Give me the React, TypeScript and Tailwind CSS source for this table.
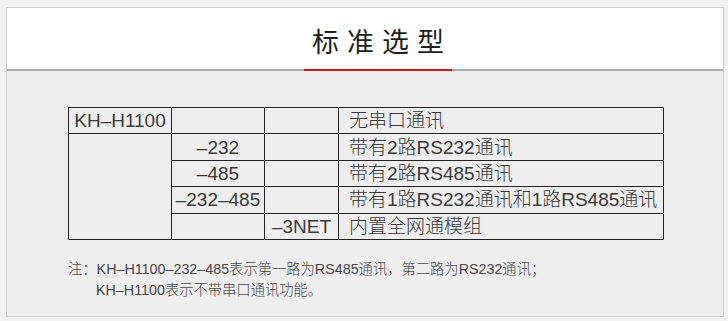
export default function App() {
  const rows = [
    { a: 'KH–H1100', b: '', c: '', d: '无串口通讯' },
    { a: null, b: '–232', c: '', d: '带有2路RS232通讯' },
    { a: null, b: '–485', c: '', d: '带有2路RS485通讯' },
    { a: null, b: '–232–485', c: '', d: '带有1路RS232通讯和1路RS485通讯' },
    { a: null, b: '', c: '–3NET', d: '内置全网通模组' },
  ];

  return (
    <div
      className="w-full h-[321px] bg-[#f1f1f1] pt-[7px] pl-[6px]"
      style={{ fontFamily: '"Liberation Sans", "Noto Sans CJK SC", sans-serif' }}
    >
      <div className="w-[718px] h-[310px] border border-[#cdcdcd] bg-[#eeeeee]">
        {/* header */}
        <div className="bg-white h-[61px] flex items-end pl-[297px]">
          <div className="w-[148px] text-center text-[27px] leading-[27px] tracking-[8px] pl-[8px] text-[#1e1e1e] pb-[12px]">
            标准选型
          </div>
        </div>
        <div className="h-[2px] bg-[#ababab] flex">
          <div className="w-[297px]" />
          <div className="w-[148px] bg-[#c81a1a]" />
        </div>

        {/* table */}
        <div className="pt-[36px] pl-[61px]">
          <table className="border-collapse text-[19px] text-[#3a3a3a] font-light leading-none">
            <tbody>
              {rows.map((r, i) => (
                <tr key={i} className="h-[26.4px]">
                  {i === 0 && (
                    <td className="border border-[#222] w-[103px] text-center p-0">{r.a}</td>
                  )}
                  {i === 1 && <td rowSpan={4} className="border border-[#222] w-[103px] p-0" />}
                  <td className="border border-[#222] w-[93px] text-center p-0">{r.b}</td>
                  <td className="border border-[#222] w-[74px] text-center p-0">{r.c}</td>
                  <td className="border border-[#222] w-[325px] pl-[10px] p-0 whitespace-nowrap">{r.d}</td>
                </tr>
              ))}
            </tbody>
          </table>
        </div>

        {/* note */}
        <div className="pl-[61px] pt-[19px] text-[14.3px] leading-[21px] text-[#484848] font-light whitespace-nowrap">
          <div>注：KH–H1100–232–485表示第一路为RS485通讯，第二路为RS232通讯；</div>
          <div className="pl-[28px]">KH–H1100表示不带串口通讯功能。</div>
        </div>
      </div>
    </div>
  );
}
